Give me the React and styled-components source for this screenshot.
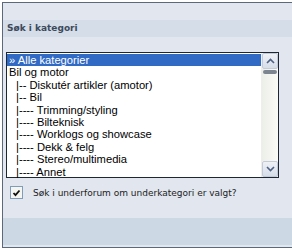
import React from 'react';
import styled, {createGlobalStyle} from 'styled-components';

const GlobalStyle = createGlobalStyle`
  html, body {
    margin: 0;
    padding: 0;
    background: #ffffff;
  }
  #root {
    width: 292px;
    height: 250px;
    overflow: hidden;
  }
`

const categories = [
    {label: '» Alle kategorier', depth: 0, selected: true},
    {label: 'Bil og motor', depth: 0},
    {label: '|-- Diskutér artikler (amotor)', depth: 1},
    {label: '|-- Bil', depth: 1},
    {label: '|---- Trimming/styling', depth: 1},
    {label: '|---- Bilteknisk', depth: 1},
    {label: '|---- Worklogs og showcase', depth: 1},
    {label: '|---- Dekk & felg', depth: 1},
    {label: '|---- Stereo/multimedia', depth: 1},
    {label: '|---- Annet', depth: 1},
]

const App = () => {
    return (
        <>
            <GlobalStyle/>
            <Frame>
                <TopSpace/>
                <Header>Søk i kategori</Header>
                <Body>
                    <ListBox>
                        <Options>
                            {categories.map((item) => (
                                <Option key={item.label} selected={item.selected} depth={item.depth}>
                                    {item.label}
                                </Option>
                            ))}
                        </Options>
                        <ScrollBar>
                            <ScrollButton>
                                <svg width="9" height="6" viewBox="0 0 9 6">
                                    <path d="M1 5 L4.5 1.5 L8 5" fill="none" stroke="#4d6185" strokeWidth="1.6"/>
                                </svg>
                            </ScrollButton>
                            <Track>
                                <Thumb/>
                            </Track>
                            <ScrollButton>
                                <svg width="9" height="6" viewBox="0 0 9 6">
                                    <path d="M1 1 L4.5 4.5 L8 1" fill="none" stroke="#4d6185" strokeWidth="1.6"/>
                                </svg>
                            </ScrollButton>
                        </ScrollBar>
                    </ListBox>
                    <CheckRow>
                        <CheckBox>
                            <svg width="9" height="8" viewBox="0 0 9 8">
                                <path d="M1.5 4 L3.5 6.2 L7.5 1.5" fill="none" stroke="#111" strokeWidth="1.8"/>
                            </svg>
                        </CheckBox>
                        <CheckLabel>Søk i underforum om underkategori er valgt?</CheckLabel>
                    </CheckRow>
                </Body>
                <Footer/>
            </Frame>
        </>
    );
};

export default App;


const Frame = styled.div`
  margin: 2px 0 0 2px;
  height: 244px;
  border: 1px solid #5d6978;
  border-right: none;
  background-color: #e1e6ef;
  display: flex;
  flex-direction: column;
`

const TopSpace = styled.div`
  height: 17px;
`

const Header = styled.div`
  height: 17px;
  line-height: 17px;
  padding-left: 4px;
  background-color: #d5dde8;
  font-family: 'DejaVu Sans', Verdana, sans-serif;
  font-size: 9px;
  font-weight: bold;
  color: #3c4b5c;
`

const Body = styled.div`
  flex: 1;
  padding: 15px 0 0 3px;
`

const ListBox = styled.div`
  width: 271px;
  height: 124px;
  border: 1px solid #1d2733;
  background-color: #ffffff;
  display: flex;
`

const Options = styled.div`
  flex: 1;
  padding-top: 1px;
`

const Option = styled.div`
  height: 12.4px;
  line-height: 12.4px;
  padding-left: ${props => props.depth ? '9px' : '2px'};
  font-family: 'Liberation Sans', Tahoma, sans-serif;
  font-size: 11.2px;
  white-space: nowrap;
  color: ${props => props.selected ? '#ffffff' : '#000000'};
  background-color: ${props => props.selected ? '#316ac5' : 'transparent'};
`

const ScrollBar = styled.div`
  width: 16px;
  display: flex;
  flex-direction: column;
  background-color: #f4f4f0;
  border-left: 1px solid #eeeeea;
`

const ScrollButton = styled.div`
  height: 14px;
  display: flex;
  align-items: center;
  justify-content: center;
  background: linear-gradient(#eef1f6, #d7dde8);
  border: 1px solid #c3cbd8;
  border-radius: 2px;
`

const Track = styled.div`
  flex: 1;
  background: linear-gradient(90deg, #eceee8, #fbfbf8);
`

const Thumb = styled.div`
  height: 4px;
  margin: 1px 1px 0;
  background-color: #7c8590;
  border-radius: 3px;
`

const CheckRow = styled.div`
  display: flex;
  align-items: center;
  gap: 10px;
  padding: 8px 0 0 4px;
`

const CheckBox = styled.div`
  width: 11px;
  height: 11px;
  border: 1px solid #7f9db9;
  background-color: #f5f5f2;
  display: flex;
  align-items: center;
  justify-content: center;
`

const CheckLabel = styled.div`
  font-family: 'DejaVu Sans', Verdana, sans-serif;
  font-size: 9px;
  color: #222;
`

const Footer = styled.div`
  height: 27px;
  background-color: #cdd8e5;
  border-bottom: 2px solid #dfe7f0;
`
